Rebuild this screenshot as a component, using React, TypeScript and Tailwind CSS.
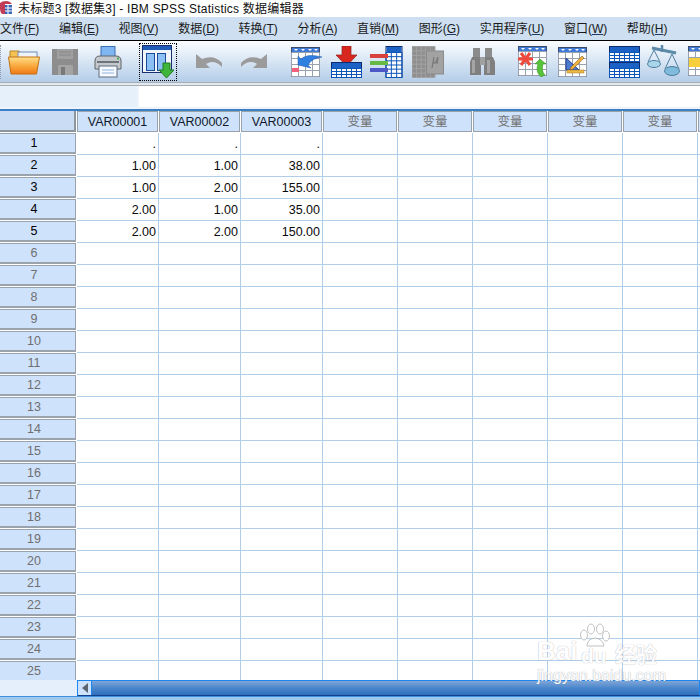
const menus = [
  ['文件', 'F'],
  ['编辑', 'E'],
  ['视图', 'V'],
  ['数据', 'D'],
  ['转换', 'T'],
  ['分析', 'A'],
  ['直销', 'M'],
  ['图形', 'G'],
  ['实用程序', 'U'],
  ['窗口', 'W'],
  ['帮助', 'H'],
];

const widths = ['w-[82px]', 'w-[82px]', 'w-[82px]', 'w-[75px]', 'w-[75px]', 'w-[75px]', 'w-[75px]', 'w-[75px]', 'w-[75px]'];

const data: Record<number, string[]> = {
  1: ['.', '.', '.'],
  2: ['1.00', '1.00', '38.00'],
  3: ['1.00', '2.00', '155.00'],
  4: ['2.00', '1.00', '35.00'],
  5: ['2.00', '2.00', '150.00'],
};

function GridLines({ x, y, w, h, cols, rows }: { x: number; y: number; w: number; h: number; cols: number; rows: number }) {
  const lines = [];
  for (let i = 0; i <= cols; i++) {
    const px = x + (w * i) / cols;
    lines.push(<line key={'c' + i} x1={px} y1={y} x2={px} y2={y + h} />);
  }
  for (let i = 0; i <= rows; i++) {
    const py = y + (h * i) / rows;
    lines.push(<line key={'r' + i} x1={x} y1={py} x2={x + w} y2={py} />);
  }
  return <g>{lines}</g>;
}

function MiniTable({ children }: { children?: React.ReactNode }) {
  return (
    <>
      <rect x="0.5" y="0.5" width="28" height="29" fill="#fff" stroke="#3a4a68" />
      <rect x="1" y="1" width="27" height="4" fill="#3f7ad6" />
      <g fill="#fff">
        <path d="M3 2h4l-2 2zM10 2h4l-2 2zM17 2h4l-2 2zM23 2h4l-2 2z" />
      </g>
      <g stroke="#9aa1ae" strokeWidth="1">
        <GridLines x={0.5} y={5.5} w={28} h={24} cols={4} rows={4} />
      </g>
      {children}
    </>
  );
}

function BlueTable({ x, y, w, h }: { x: number; y: number; w: number; h: number }) {
  return (
    <g>
      <rect x={x + 0.5} y={y + 0.5} width={w} height={h} fill="#fff" stroke="#0d2a6e" />
      <rect x={x + 1} y={y + 1} width={w - 1} height={5} fill="#1b62c4" />
      <g stroke="#0b55b8">
        <GridLines x={x + 0.5} y={y + 6.5} w={w} h={h - 6} cols={6} rows={3} />
      </g>
    </g>
  );
}

function Toolbar() {
  return (
    <div className="relative flex h-[42px] w-full items-center overflow-hidden border-t border-black bg-gradient-to-b from-[#fbfdff] to-[#b4cde8]">
      <div className="ml-0 h-[34px] w-[2px] border-l border-dotted border-[#8f9bad]" />
      {/* open */}
      <svg className="ml-[7px] shrink-0" width="32" height="30" viewBox="0 0 32 30">
        <path d="M2 4h9l2 2h15v6H2z" fill="#f3c252" stroke="#b8842a" />
        <rect x="10" y="5" width="19" height="8" fill="#eef3fa" stroke="#6f8cb8" />
        <defs>
          <linearGradient id="fold" x1="0" y1="0" x2="0" y2="1">
            <stop offset="0" stopColor="#ffe08a" />
            <stop offset="0.55" stopColor="#f9a63a" />
            <stop offset="1" stopColor="#ef7a18" />
          </linearGradient>
        </defs>
        <path d="M0.5 10h31l-3 17H3z" fill="url(#fold)" stroke="#c46f14" />
      </svg>
      {/* save */}
      <svg className="ml-[12px] shrink-0" width="27" height="27" viewBox="0 0 27 27">
        <path d="M0 1h26v26H0z" fill="#8d8d8d" />
        <rect x="5" y="1" width="16" height="10" fill="#a0a0a0" />
        <path d="M7 4h12M7 7h12" stroke="#858585" />
        <rect x="6" y="17" width="15" height="10" fill="#a4a4a4" />
        <rect x="9" y="19" width="4" height="8" fill="#7a7a7a" />
      </svg>
      {/* print */}
      <svg className="ml-[15px] shrink-0" width="28" height="32" viewBox="0 0 28 32">
        <rect x="7" y="0.5" width="14" height="11" fill="#7fb6f2" stroke="#3a6fb6" />
        <path d="M1 15q0-5 5-5h16q5 0 5 5v8H1z" fill="#c4c8cc" stroke="#5e6468" />
        <rect x="3" y="15" width="22" height="2" fill="#6d7378" />
        <rect x="23" y="11.5" width="2" height="2" fill="#48b04a" />
        <rect x="5" y="20" width="18" height="11" fill="#f6f9fd" stroke="#5e6c80" />
        <path d="M8 24h12M8 27h12" stroke="#8fb4dd" />
      </svg>
      {/* variables, active */}
      <div className="ml-[17px] flex h-[38px] w-[38px] shrink-0 items-center justify-center border border-dotted border-black">
        <svg width="32" height="33" viewBox="0 0 32 33">
          <rect x="0.5" y="0.5" width="29" height="27" fill="#f0f5fd" stroke="#17306b" />
          <rect x="1" y="1" width="28" height="4" fill="#1f5cb8" />
          <rect x="4.5" y="8.5" width="8" height="17" fill="#8cc0f4" stroke="#1b4c9c" />
          <rect x="15.5" y="8.5" width="8" height="17" fill="#8cc0f4" stroke="#1b4c9c" />
          <path d="M21 18h7v7h4l-7.500 8-7.500-8h4z" fill="#3fb53a" stroke="#207a25" />
        </svg>
      </div>
      {/* undo */}
      <svg className="ml-[19px] shrink-0" width="27" height="15" viewBox="0 0 27 15">
        <path d="M0 0v14h14l-4-4q8-5 16 3v-4q-8-9-20-4z" fill="#9b9b9b" />
      </svg>
      {/* redo */}
      <svg className="ml-[17px] shrink-0" width="27" height="15" viewBox="0 0 27 15">
        <path d="M27 0v14H13l4-4q-8-5-16 3V9q8-9 20-4z" fill="#9b9b9b" />
      </svg>
      {/* go to case */}
      <svg className="ml-[24px] shrink-0" width="32" height="30" viewBox="0 0 32 30">
        <MiniTable>
          <rect x="1" y="21" width="7" height="4" fill="#f0607a" />
          <path d="M7 18V9l3 3q6-6 21-2-10 1-14 8l3 3z" fill="#2f7fe0" stroke="#1d55a8" strokeWidth="0.5" />
        </MiniTable>
      </svg>
      {/* insert cases */}
      <svg className="ml-[8px] shrink-0" width="31" height="32" viewBox="0 0 31 32">
        <path d="M11 0h9v9h6L15.500 20 5 9h6z" fill="#d8271f" stroke="#8f1c17" strokeWidth="0.7" />
        <BlueTable x={0} y={16} w={30} h={15} />
      </svg>
      {/* insert variable */}
      <svg className="ml-[8px] shrink-0" width="33" height="32" viewBox="0 0 33 32">
        <rect x="16" y="0.500" width="16" height="31" fill="#fff" stroke="#0d2a6e" />
        <rect x="16.500" y="1" width="15" height="5" fill="#1b62c4" />
        <g stroke="#0b55b8">
          <GridLines x={16} y={6.5} w={16} h={25} cols={3} rows={6} />
        </g>
        <rect x="0" y="8" width="18" height="4" fill="#d9413d" />
        <rect x="0" y="15" width="18" height="4" fill="#66b945" />
        <rect x="0" y="22" width="18" height="4" fill="#4d57c5" />
      </svg>
      {/* split, disabled */}
      <svg className="ml-[9px] shrink-0" width="33" height="32" viewBox="0 0 33 32">
        <rect x="0" y="0" width="23" height="32" fill="#8f8f8f" />
        <g stroke="#a3a3a3">
          <GridLines x={0} y={0.5} w={23} h={31} cols={5} rows={7} />
        </g>
        <rect x="14.500" y="5" width="17" height="23" fill="#a2a2a2" stroke="#8a8a8a" />
        <path d="M20 22l2-11M22 11l-1 6q3 1 5-6M26 11l-1 7" fill="none" stroke="#7a7a7a" strokeWidth="1.300" />
      </svg>
      {/* find */}
      <svg className="ml-[25px] shrink-0" width="25" height="28" viewBox="0 0 25 28">
        <rect x="3" y="0" width="7" height="10" fill="#8b8b8b" />
        <rect x="15" y="0" width="7" height="10" fill="#8b8b8b" />
        <path d="M2 9h9l0 18H0V14z" fill="#7f7f7f" />
        <path d="M14 9h9l2 5v13H14z" fill="#7f7f7f" />
        <rect x="10" y="9" width="5" height="8" fill="#a0a0a0" />
        <rect x="2" y="12" width="3" height="13" fill="#a5a5a5" />
        <rect x="17" y="12" width="3" height="13" fill="#a5a5a5" />
      </svg>
      {/* select cases */}
      <svg className="ml-[23px] shrink-0" width="29" height="31" viewBox="0 0 29 31">
        <MiniTable>
          <path d="M0 13h15M3 7l9 12M12 7l-9 12" stroke="#ef4a3c" strokeWidth="3" />
          <path d="M23 31q-6-5-3-13h-3l5-5 6 5h-3q-2 7 2 11z" fill="#58c23a" stroke="#2b8a22" strokeWidth="0.5" />
        </MiniTable>
      </svg>
      {/* weight */}
      <svg className="ml-[11px] shrink-0" width="30" height="30" viewBox="0 0 30 30">
        <MiniTable>
          <path d="M8 11v12h13z" fill="#4d7bd0" stroke="#1f3f8f" />
          <rect x="9" y="23" width="17" height="3" fill="#e9b948" stroke="#a8791f" strokeWidth="0.5" />
          <path d="M13 20l11-11 2 2-11 11-3 1z" fill="#efb23c" stroke="#7a4a16" strokeWidth="0.5" />
        </MiniTable>
      </svg>
      {/* split file */}
      <svg className="ml-[21px] shrink-0" width="31" height="32" viewBox="0 0 31 32">
        <BlueTable x={0} y={0} w={30} h={15} />
        <BlueTable x={0} y={16} w={30} h={15} />
      </svg>
      {/* scale */}
      <svg className="ml-[7px] shrink-0" width="33" height="33" viewBox="0 0 33 33">
        <path d="M5 3l24 5" stroke="#5c8aa8" strokeWidth="3" />
        <path d="M15 0v7" stroke="#5c8aa8" strokeWidth="2.500" />
        <g fill="none" stroke="#4d7f9f">
          <path d="M7 5L1 17M7 5l6 12" />
          <path d="M25 9l-7 15M25 9l7 15" />
        </g>
        <ellipse cx="7" cy="19" rx="6.500" ry="3.500" fill="#a9d5ea" stroke="#4d7f9f" />
        <ellipse cx="25" cy="26" rx="7.500" ry="4.500" fill="#7fbbdc" stroke="#4d7f9f" />
      </svg>
      {/* value labels */}
      <svg className="ml-[8px] shrink-0" width="29" height="31" viewBox="0 0 29 31">
        <MiniTable>
          <rect x="1" y="12" width="27" height="9" fill="#f7cf3c" />
        </MiniTable>
      </svg>
    </div>
  );
}

function Mnemonic({ name, letter }: { name: string; letter: string }) {
  return (
    <span className="shrink-0 whitespace-nowrap">
      {name}(<span className="underline decoration-[#223a66]">{letter}</span>)
    </span>
  );
}

function HeaderCell({ label, width, empty }: { label: string; width: string; empty: boolean }) {
  return (
    <div className={`${width} h-[22px] shrink-0 bg-white pr-[1px]`}>
      <div
        className={`flex h-[21px] items-center justify-center border border-[#9aa2ab] bg-[#cfe2fb] pt-[1px] ${
          empty ? 'text-[#6f6f6f]' : 'text-[#10182c]'
        }`}
      >
        {label}
      </div>
    </div>
  );
}

function Row({ n }: { n: number }) {
  const vals = data[n] ?? [];
  return (
    <div className="flex h-[22px]">
      <div
        className={`flex h-[21px] w-[76px] shrink-0 items-center justify-center border-y border-r border-b-2 border-[#9aa2ab] bg-[#cfe2fb] pt-[1px] pr-[7px] ${
          n <= 5 ? 'text-black' : 'text-[#6f6f6f]'
        }`}
      >
        {n}
      </div>
      <div className="w-[1px] shrink-0 bg-white" />
      {widths.map((w, i) => (
        <div
          key={i}
          className={`${w} flex h-[22px] shrink-0 items-center justify-end border-r border-b border-[#b0cdea] pt-[1px] pr-[2px] text-[#0a0a0a]`}
        >
          {vals[i] ?? ''}
        </div>
      ))}
      <div className="flex-1 border-b border-[#b0cdea]" />
    </div>
  );
}

export default function App() {
  const rows = Array.from({ length: 25 }, (_, i) => i + 1);
  return (
    <div
      className="relative h-[700px] w-[700px] overflow-hidden bg-white text-[12.5px]"
      style={{ fontFamily: '"Liberation Sans", "Noto Sans CJK SC", sans-serif' }}
    >
      {/* title */}
      <div className="flex h-[17px] items-center bg-white text-[12px] tracking-[0.22px] text-[#111]">
        <svg className="-mt-[3px] mr-[6px] ml-0 shrink-0" width="12" height="13" viewBox="0 0 12 13">
          <path d="M0 2q2-2 6-2t6 3H5v10H2q-2-2-2-5z" fill="#c23b57" />
          <rect x="5" y="4" width="7" height="9" fill="#3a66b8" />
          <path d="M5 7h7M5 10h7M8 4v9" stroke="#fff" />
        </svg>
        <span className="whitespace-nowrap">未标题3 [数据集3] - IBM SPSS Statistics 数据编辑器</span>
      </div>

      {/* menu */}
      <div className="flex h-[23px] items-center gap-[19.6px] overflow-hidden bg-[#cddff0] text-[12px] text-[#1a1a1a]">
        {menus.map(([name, letter]) => (
          <Mnemonic key={name} name={name} letter={letter} />
        ))}
      </div>

      <Toolbar />
      <div className="h-[4px] border-y border-[#a9adb2] bg-[#e3e9f0]" />

      {/* cell editor */}
      <div className="h-[23px] bg-[#edf4fc]">
        <div className="flex h-[21px]">
          <div className="w-[137px] bg-[#e6f0fb]" />
          <div className="ml-[2px] flex-1 bg-white" />
        </div>
      </div>

      {/* header row */}
      <div className="flex h-[24px] border-t-2 border-[#3c7fc4]">
        <div className="h-[21px] w-[76px] shrink-0 border-r-2 border-b-2 border-[#8d959e] bg-[#c9dcf4]" />
        <div className="w-[1px] shrink-0" />
        {widths.map((w, i) => (
          <HeaderCell key={i} label={i < 3 ? `VAR0000${i + 1}` : i < 8 ? '变量' : ''} width={w} empty={i >= 3} />
        ))}
        <div className="h-[21px] flex-1 border border-[#9aa2ab] bg-[#cfe2fb]" />
      </div>

      {/* rows */}
      <div className="h-[547px] overflow-hidden">
        {rows.map((n) => (
          <Row key={n} n={n} />
        ))}
      </div>

      {/* scrollbar */}
      <div className="flex h-[16px] bg-[#e4effb]">
        <div className="w-[77px] shrink-0" />
        <div className="flex h-[16px] flex-1 border border-[#1c86f0] border-b-[#10408c]">
          <div className="flex w-[14px] shrink-0 items-center justify-center border-r border-[#1c86f0] bg-[#cfe2fb]">
            <div className="h-0 w-0 border-y-[5px] border-r-[6px] border-y-transparent border-r-[#5c6670]" />
          </div>
          <div className="flex-1 bg-gradient-to-b from-[#7fa6d8] via-[#4a86cb] to-[#2f6fbc]" />
        </div>
      </div>
      <div className="h-[4px] border-t border-[#3f8fdc] bg-[#9cc8f0]" />

      {/* watermark */}
      <div className="pointer-events-none absolute top-[622px] left-[534px] h-[62px] w-[130px] text-white opacity-90">
        <span className="absolute top-[13px] left-[3px] text-[26px] leading-[32px] font-bold [text-shadow:0_0_1px_#99a]">Bai</span>
        <span className="absolute top-[22px] left-[47px] text-[21px] leading-[24px] font-bold [text-shadow:0_0_1px_#99a]">du</span>
        <span className="absolute top-[21px] left-[81px] text-[21px] leading-[24px] font-bold [text-shadow:0_0_1px_#99a]">经验</span>
        <span className="absolute top-[45px] left-[3px] text-[16px] leading-[18px] whitespace-nowrap [text-shadow:0_0_1px_#889]">jingyan.baidu.com</span>
        <svg className="absolute top-[1px] left-[44px]" width="34" height="24" viewBox="0 0 34 24">
          <g fill="#fff" stroke="#bbb" strokeWidth="1">
            <ellipse cx="6" cy="12" rx="3.500" ry="5" />
            <ellipse cx="13" cy="6" rx="3.500" ry="5" />
            <ellipse cx="22" cy="6" rx="3.500" ry="5" />
            <ellipse cx="28" cy="13" rx="3.500" ry="5" />
            <path d="M9 23q0-7 8-8 8 1 9 8z" />
          </g>
        </svg>
      </div>
    </div>
  );
}
